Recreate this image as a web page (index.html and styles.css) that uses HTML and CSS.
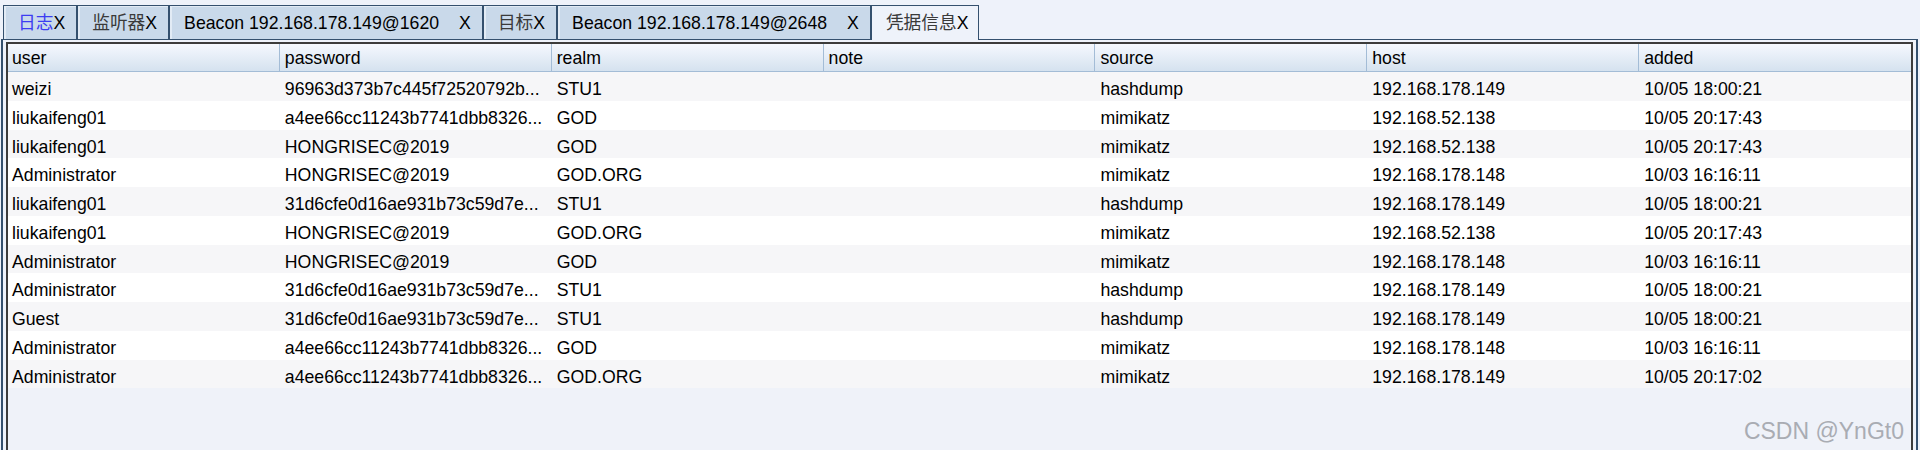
FILE: index.html
```html
<!DOCTYPE html>
<html lang="zh">
<head>
  <meta charset="UTF-8" />
  <title>凭据信息</title>
  <link rel="stylesheet" href="styles.css">
</head>
<body>
  <div class="tabs">
    <div class="tab"><span class="blue">日志</span>X</div>
    <div class="tab"><span class="cjk">监听器</span>X</div>
    <div class="tab">Beacon 192.168.178.149@1620<span class="close">X</span></div>
    <div class="tab"><span class="cjk">目标</span>X</div>
    <div class="tab">Beacon 192.168.178.149@2648<span class="close">X</span></div>
    <div class="tab active"><span class="cjk">凭据信息</span>X</div>
  </div>

  <div class="frame">
    <div class="table">
      <div class="row head">
        <div class="cell">user</div>
        <div class="cell">password</div>
        <div class="cell">realm</div>
        <div class="cell">note</div>
        <div class="cell">source</div>
        <div class="cell">host</div>
        <div class="cell">added</div>
      </div>
      <div class="body" id="rows"></div>
    </div>
  </div>

  <div class="watermark">CSDN @YnGt0</div>

  <script>
    const creds = [
      ["weizi", "96963d373b7c445f72520792b...", "STU1", "", "hashdump", "192.168.178.149", "10/05 18:00:21"],
      ["liukaifeng01", "a4ee66cc11243b7741dbb8326...", "GOD", "", "mimikatz", "192.168.52.138", "10/05 20:17:43"],
      ["liukaifeng01", "HONGRISEC@2019", "GOD", "", "mimikatz", "192.168.52.138", "10/05 20:17:43"],
      ["Administrator", "HONGRISEC@2019", "GOD.ORG", "", "mimikatz", "192.168.178.148", "10/03 16:16:11"],
      ["liukaifeng01", "31d6cfe0d16ae931b73c59d7e...", "STU1", "", "hashdump", "192.168.178.149", "10/05 18:00:21"],
      ["liukaifeng01", "HONGRISEC@2019", "GOD.ORG", "", "mimikatz", "192.168.52.138", "10/05 20:17:43"],
      ["Administrator", "HONGRISEC@2019", "GOD", "", "mimikatz", "192.168.178.148", "10/03 16:16:11"],
      ["Administrator", "31d6cfe0d16ae931b73c59d7e...", "STU1", "", "hashdump", "192.168.178.149", "10/05 18:00:21"],
      ["Guest", "31d6cfe0d16ae931b73c59d7e...", "STU1", "", "hashdump", "192.168.178.149", "10/05 18:00:21"],
      ["Administrator", "a4ee66cc11243b7741dbb8326...", "GOD", "", "mimikatz", "192.168.178.148", "10/03 16:16:11"],
      ["Administrator", "a4ee66cc11243b7741dbb8326...", "GOD.ORG", "", "mimikatz", "192.168.178.149", "10/05 20:17:02"]
    ];

    const rowsEl = document.getElementById("rows");
    creds.forEach((c) => {
      const row = document.createElement("div");
      row.className = "row";
      c.forEach((v) => {
        const cell = document.createElement("div");
        cell.className = "cell";
        cell.textContent = v;
        row.appendChild(cell);
      });
      rowsEl.appendChild(row);
    });
  </script>
</body>
</html>
```

FILE: styles.css
```css
body {
  margin: 0;
  height: 450px;
  overflow: hidden;
  background: #eef2fa;
  color: #000;
  font-family: "Liberation Sans", Arial, "Noto Sans CJK SC", sans-serif;
  font-size: 17.7px;
  display: flex;
  flex-direction: column;
  position: relative;
}
.tabs {
  display: flex;
  align-items: flex-end;
  padding: 5px 0 0 3px;
  position: relative;
  z-index: 1;
}
.tab {
  box-sizing: border-box;
  height: 34px;
  padding: 2px 11px 0 14px;
  line-height: 30px;
  background: #c9d9ea;
  border: 1px solid #34506e;
  border-bottom: none;
  box-shadow: inset 2px 1px 0 #e2ebf5;
  white-space: nowrap;
}
.tab.active {
  height: 35px;
  margin-bottom: -1px;
  padding-right: 9px;
  background: #eef2fa;
  box-shadow: none;
}
.blue {
  color: #3c3cf2;
}
.cjk {
  color: #3a3a3a;
}
.close {
  margin-left: 20px;
}
.frame {
  flex: 1;
  display: flex;
  flex-direction: column;
  margin: 0 2px 0 1px;
  padding: 2px 3px 0 3px;
  border: 2px solid #34506e;
  border-top-width: 1px;
  border-bottom: none;
}
.table {
  flex: 1;
  border: 2px solid #3c3c3c;
  border-bottom: none;
  background: #eff2f9;
}
.row {
  display: grid;
  grid-template-columns: repeat(7, 1fr);
  height: 28.75px;
  background: #fff;
}
.body .row:nth-child(odd) {
  background: #f6f6f8;
}
.cell {
  box-sizing: border-box;
  padding: 6px 0 0 5px;
  line-height: 22.75px;
  white-space: nowrap;
  overflow: hidden;
}
.row .cell:first-child {
  padding-left: 4px;
}
.row.head {
  height: 27px;
  background: linear-gradient(#f5f8fe, #d5e2ef);
  border-bottom: 1px solid #a3bcd6;
}
.head .cell {
  padding-top: 3px;
  line-height: 23px;
  border-right: 1px solid #a3bcd6;
}
.head .cell:last-child {
  border-right: none;
}
.watermark {
  position: absolute;
  right: 16px;
  top: 419px;
  font-size: 23px;
  line-height: 24px;
  color: #a9acb3;
}
```
